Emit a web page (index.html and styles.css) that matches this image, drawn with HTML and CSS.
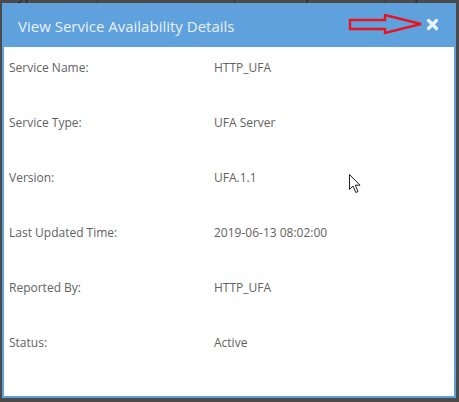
FILE: index.html
```html
<!DOCTYPE html>
<html>
<head>
<meta charset="utf-8">
<link rel="stylesheet" href="styles.css">
</head>
<body>
<div class="page">
  <div class="bg-head">
    <div class="bg-col c1">Type</div>
    <div class="bg-col c2">Version</div>
    <div class="bg-col c3">Time Reported</div>
    <div class="bg-col c4">Reported</div>
  </div>
</div>
<div class="modal">
  <div class="modal-header">
    <span class="title">View Service Availability Details</span>
    <svg class="arrow" width="80" height="24" viewBox="0 0 80 24">
      <polygon points="2,6 37,6 37,1 73,10 37,19 37,15 2,15" fill="none" stroke="#e8141c" stroke-width="2.4" stroke-linejoin="miter"/>
    </svg>
    <svg class="close" width="13" height="13" viewBox="0 0 13 13">
      <path d="M2.5 2.5 L10.5 10.5 M10.5 2.5 L2.5 10.5" stroke="#e9f1fa" stroke-width="3.4" stroke-linecap="round"/>
    </svg>
  </div>
  <div class="modal-body">
    <div class="row"><span class="label">Service Name:</span><span class="value">HTTP_UFA</span></div>
    <div class="row"><span class="label">Service Type:</span><span class="value">UFA Server</span></div>
    <div class="row"><span class="label">Version:</span><span class="value">UFA.1.1</span></div>
    <div class="row"><span class="label">Last Updated Time:</span><span class="value">2019-06-13 08:02:00</span></div>
    <div class="row"><span class="label">Reported By:</span><span class="value">HTTP_UFA</span></div>
    <div class="row"><span class="label">Status:</span><span class="value">Active</span></div>
  </div>
  <svg class="cursor" width="14" height="20" viewBox="0 0 14 20">
    <path d="M0.5 0.5 L0.5 15.5 L4 12 L6.8 18.5 L9 17.5 L6.3 11.2 L11 11.2 Z" fill="#fff" stroke="#222" stroke-width="1"/>
  </svg>
</div>
</body>
</html>
```
FILE: styles.css
```css
html, body {
  margin: 0;
  padding: 0;
}
body {
  width: 459px;
  height: 402px;
  background: #4b4b4b;
  overflow: hidden;
  position: relative;
  font-family: "Open Sans", "Liberation Sans", sans-serif;
}
.page {
  height: 402px;
}
.bg-head {
  position: relative;
  height: 4px;
  overflow: hidden;
}
.bg-col {
  position: absolute;
  top: -15px;
  font-size: 14px;
  line-height: 18px;
  color: #262626;
  height: 20px;
}
.c1 { left: 10px; }
.c2 { left: 108px; }
.c3 { left: 253px; }
.c4 { left: 398px; }
.bg-head::before,
.bg-head::after {
  content: "";
  position: absolute;
  top: 0;
  width: 1px;
  height: 4px;
  background: #333;
}
.bg-head::before { left: 234px; }
.bg-head::after { left: 385px; }
.c2::before {
  content: "";
  position: absolute;
  left: -11px;
  top: 0;
  bottom: 0;
  width: 1px;
  background: #333;
}

.modal {
  position: absolute;
  left: 2px;
  top: 3px;
  width: 454px;
  height: 395px;
  background: #5ea1dd;
  box-sizing: border-box;
  padding: 0 2px 2px 2px;
  display: flex;
  flex-direction: column;
}
.modal-header {
  height: 44px;
  flex: none;
  display: flex;
  align-items: center;
  padding-left: 14px;
  position: relative;
}
.title {
  color: #e8f0f9;
  font-size: 15px;
  line-height: 20px;
  margin-top: 1px;
  flex: 1;
}
.arrow {
  position: absolute;
  left: 344px;
  top: 11px;
}
.close {
  position: absolute;
  left: 422px;
  top: 15px;
}
.modal-body {
  flex: 1;
  background: #fff;
  padding: 13px 0 0 5px;
}
.row {
  height: 55px;
  display: flex;
  font-size: 12px;
  line-height: 16px;
  color: #626262;
}
.label {
  width: 205px;
  flex: none;
}
.value {
  flex: 1;
}
.cursor {
  position: absolute;
  left: 347px;
  top: 171px;
}
```
